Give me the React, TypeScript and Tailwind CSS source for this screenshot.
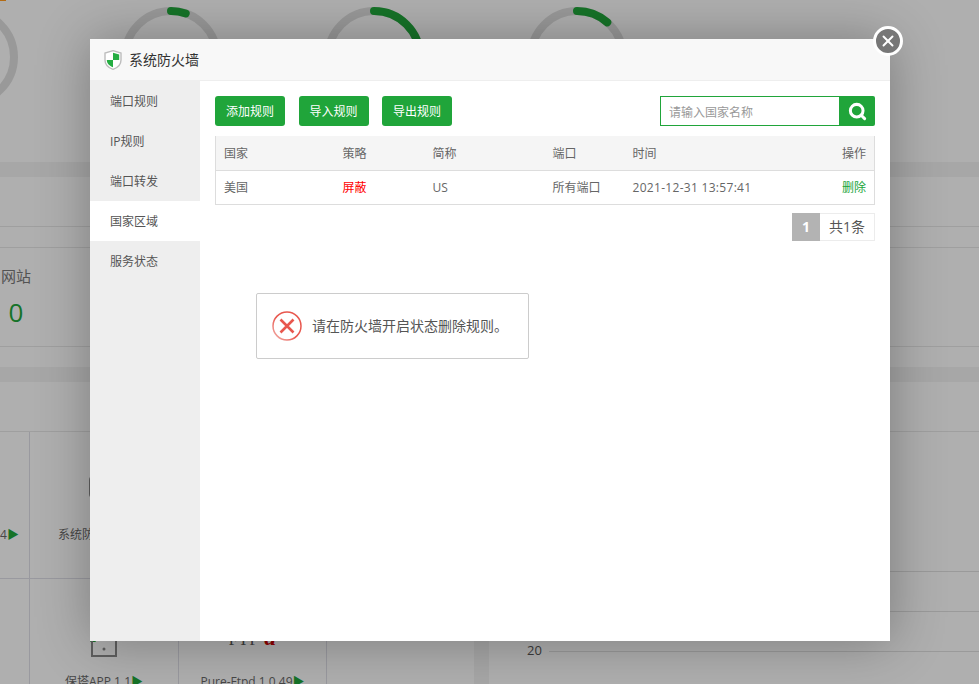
import { Search, X } from "lucide-react";

const gauges = [
  { key: "load", dash: 0 },
  { key: "cpu", dash: 15 },
  { key: "mem", dash: 96 },
  { key: "disk", dash: 33 },
];

const tabs = ["端口规则", "IP规则", "端口转发", "国家区域", "服务状态"];

function Gauge({ dash }: { dash: number }) {
  return (
    <svg width="100" height="100" viewBox="0 0 100 100" className="shrink-0">
      <circle cx="50" cy="50" r="46" fill="none" stroke="#dcdcdc" strokeWidth="8" />
      {dash > 0 ? (
        <circle
          cx="50"
          cy="50"
          r="46"
          fill="none"
          stroke="#20a53a"
          strokeWidth="8"
          strokeLinecap="round"
          strokeDasharray={`${dash} 289`}
          transform="rotate(-90 50 50)"
        />
      ) : null}
    </svg>
  );
}

function Shield() {
  return (
    <svg width="18" height="20" viewBox="0 0 18 20" className="shrink-0">
      <path d="M9 .7 17 3v7c0 4.500-3.500 7.800-8 9.300C4.500 17.800 1 14.500 1 10V3z" fill="#fff" stroke="#bdbdbd" strokeWidth="1.400" />
      <path d="M9 2.800 15.200 4.600V10H9zM9 10v7.200C5.600 15.800 2.800 13.500 2.800 10z" fill="#25ad42" />
    </svg>
  );
}

function ErrorIcon() {
  return (
    <svg width="30" height="30" viewBox="0 0 30 30" className="shrink-0">
      <defs>
        <linearGradient id="ring" x1="1" y1="0" x2="0" y2="1">
          <stop offset="0.55" stopColor="#e8574e" />
          <stop offset="1" stopColor="#f3b5b0" />
        </linearGradient>
      </defs>
      <circle cx="15" cy="15" r="14" fill="none" stroke="url(#ring)" strokeWidth="1.500" />
      <path d="M8.500 8.500 21.500 21.500M21.500 8.500 8.500 21.500" stroke="#e8574e" strokeWidth="2.600" />
    </svg>
  );
}

function Plugin({ name, children }: { name: string; children?: React.ReactNode }) {
  return (
    <div className="flex flex-col items-center whitespace-nowrap border-r border-[#dcdce4] pt-[43px]">
      <div className="flex h-[50px] items-end justify-center">{children}</div>
      <div className="mt-[2px] text-xs leading-4 text-[#666]">
        {name}
        <span className="text-[#20a53a]">▶</span>
      </div>
    </div>
  );
}

export default function App() {
  return (
    <div className="relative h-[684px] w-[979px] overflow-hidden bg-[#fbfbfb] font-['Open_Sans','Noto_Sans_CJK_SC',sans-serif]">
      {/* dashboard behind the dialog */}
      <div className="h-[162px]">
        <div className="h-px w-[6px] bg-[#ff9a1f]" />
        <div className="-ml-[82px] flex gap-[103px] pt-[6px]">
          {gauges.map((g) => (
            <Gauge key={g.key} dash={g.dash} />
          ))}
        </div>
      </div>
      <div className="h-[15px] bg-[#f0f0f0]" />
      <div className="h-[190px]">
        <div className="h-[50px] border-b border-[#e4e4e4]" />
        <div className="h-[21px] border-b border-[#e4e4e4]" />
        <div className="h-[99px] border-b border-[#e4e4e4] pt-[17px]">
          <div className="w-[32px] text-center">
            <div className="text-[15px] leading-[22px] text-[#777]">网站</div>
            <div className="mt-[7px] text-[26px] leading-[36px] text-[#20a53a]">0</div>
          </div>
        </div>
      </div>
      <div className="h-[15px] bg-[#f0f0f0]" />
      <div className="h-[50px] border-b border-[#e4e4e4]" />
      <div className="flex">
        <div className="w-[474px]">
          <div className="grid h-[147px] grid-cols-[30px_149px_148px_147px] border-b border-[#dcdce4]">
            <div className="border-r border-[#dcdce4] pt-[95px] text-xs leading-4 text-[#666]">
              4<span className="text-[#20a53a]">▶</span>
            </div>
            <Plugin name="系统防火墙 2.3">
              <div className="h-[24px] w-[30px] self-start rounded-[5px] border-2 border-[#888]" />
            </Plugin>
            <div className="border-r border-[#dcdce4]" />
            <div />
          </div>
          <div className="grid h-[110px] grid-cols-[30px_149px_148px_147px]">
            <div className="border-r border-[#dcdce4]" />
            <Plugin name="保塔APP 1.1">
              <svg width="28" height="36" viewBox="0 0 28 36" className="mb-[14px]">
                <path d="M0 20l3-5 3 5z" fill="#20a53a" />
                <path d="M2 19v15h24V19" fill="none" stroke="#888" strokeWidth="2" />
                <circle cx="14" cy="27" r="1.500" fill="#888" />
              </svg>
            </Plugin>
            <Plugin name="Pure-Ftpd 1.0.49">
              <div className="mb-[20px] flex items-baseline gap-[5px] font-['Liberation_Serif',serif] leading-6 text-[#555]">
                <span className="text-base tracking-[1px]">FTP</span>
                <span className="text-[24px] font-bold italic text-[#c00]">d</span>
              </div>
            </Plugin>
            <div />
          </div>
        </div>
        <div className="h-[260px] w-[15px] bg-[#f0f0f0]" />
        <div className="flex-1 pt-[100px]">
          <div className="ml-[60px] h-[40px] border-b border-[#ddd]" />
          <div className="ml-[60px] h-[40px] border-b border-[#ddd]" />
          <div className="flex h-[40px] items-end">
            <span className="ml-[38px] w-[22px] translate-y-[6px] text-[13px] leading-4 text-[#555]">20</span>
            <div className="flex-1 border-b border-[#ddd]" />
          </div>
        </div>
      </div>

      <div className="absolute inset-0 bg-black/30" />

      {/* firewall dialog */}
      <div className="absolute left-[90px] top-[39px] flex h-[602px] w-[800px] flex-col bg-white shadow-[1px_1px_50px_rgba(0,0,0,0.3)]">
        <button className="absolute -right-[13px] -top-[13px] flex h-[30px] w-[30px] items-center justify-center rounded-full border-[3px] border-white bg-[#777] text-white">
          <X size={18} strokeWidth={2.600} />
        </button>

        <div className="flex h-[42px] items-center gap-[7px] border-b border-[#eee] bg-[#f8f8f8] pl-[14px] text-sm text-[#333]">
          <Shield />
          <span>系统防火墙</span>
        </div>

        <div className="flex min-h-0 flex-1">
          <div className="w-[110px] bg-[#eee]">
            {tabs.map((t) => (
              <div
                key={t}
                className={
                  t === "国家区域"
                    ? "flex h-10 items-center bg-white pl-5 pt-[2px] text-xs text-[#555]"
                    : "flex h-10 items-center pl-5 pt-[2px] text-xs text-[#555]"
                }
              >
                {t}
              </div>
            ))}
          </div>

          <div className="relative flex-1 px-[15px] pt-[15px]">
            <div className="flex h-[30px] items-center">
              <div className="flex gap-[13.500px]">
                {["添加规则", "导入规则", "导出规则"].map((b) => (
                  <button
                    key={b}
                    className="h-[30px] w-[70px] rounded-[3px] bg-[#20a53a] pt-[2px] text-xs text-white"
                  >
                    {b}
                  </button>
                ))}
              </div>
              <div className="ml-auto flex h-[30px]">
                <input
                  placeholder="请输入国家名称"
                  className="h-[30px] w-[180px] border border-[#20a53a] pl-2 pt-[2px] text-xs outline-none placeholder:text-[#999]"
                />
                <div className="flex h-[30px] w-[35px] items-center justify-center rounded-r-[2px] bg-[#20a53a] text-white">
                  <Search size={19} strokeWidth={3.800} />
                </div>
              </div>
            </div>

            <table className="mt-[10px] w-[660px] table-fixed border-collapse border-x border-b border-[#ddd] text-left text-xs text-[#666]">
              <colgroup>
                <col className="w-[119px]" />
                <col className="w-[90px]" />
                <col className="w-[120px]" />
                <col className="w-[80px]" />
                <col />
                <col className="w-[60px]" />
              </colgroup>
              <thead>
                <tr className="h-[34px] border-b border-[#ddd] bg-[#f5f5f5]">
                  <th className="pl-2 pt-[2px] font-normal">国家</th>
                  <th className="pl-2 pt-[2px] font-normal">策略</th>
                  <th className="pl-2 pt-[2px] font-normal">简称</th>
                  <th className="pl-2 pt-[2px] font-normal">端口</th>
                  <th className="pl-2 pt-[2px] font-normal">时间</th>
                  <th className="pr-2 pt-[2px] text-right font-normal">操作</th>
                </tr>
              </thead>
              <tbody>
                <tr className="h-[34px]">
                  <td className="pl-2 pt-[2px]">美国</td>
                  <td className="pl-2 pt-[2px] text-[#f00]">屏蔽</td>
                  <td className="pl-2 pt-[2px]">US</td>
                  <td className="pl-2 pt-[2px]">所有端口</td>
                  <td className="pl-2 pt-[2px] tracking-[0.3px]">2021-12-31 13:57:41</td>
                  <td className="pr-2 pt-[2px] text-right text-[#20a53a]">删除</td>
                </tr>
              </tbody>
            </table>

            <div className="mt-2 flex justify-end text-sm">
              <span className="flex h-7 w-7 items-center justify-center bg-[#b3b3b3] font-bold text-white">1</span>
              <span className="flex h-7 w-[55px] items-center justify-center border border-l-0 border-[#ececec] text-[#555]">共1条</span>
            </div>

            <div className="absolute left-[56px] top-[212px] flex h-[66px] w-[273px] items-center gap-[10px] rounded-[2px] border border-[#ccc] bg-white pl-[15px] text-sm text-[#555]">
              <ErrorIcon />
              <span>请在防火墙开启状态删除规则。</span>
            </div>
          </div>
        </div>
      </div>
    </div>
  );
}
